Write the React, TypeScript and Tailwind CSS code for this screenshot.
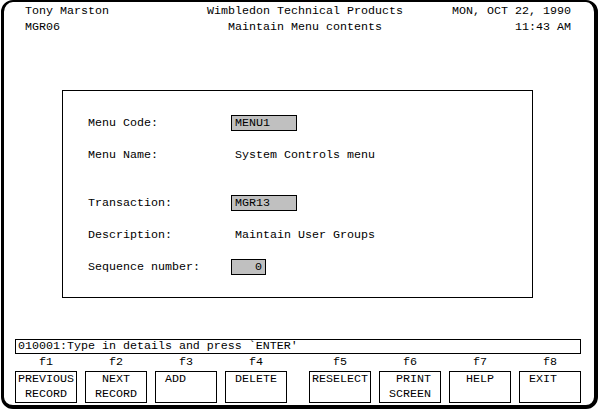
const keys = [
    { f: "f1", lines: ["PREVIOUS", " RECORD"], cls: "ml-[11px]" },
    { f: "f2", lines: ["  NEXT", " RECORD"], cls: "ml-[8px]" },
    { f: "f3", lines: [" ADD"], cls: "ml-[8px]" },
    { f: "f4", lines: [" DELETE"], cls: "ml-[8px]" },
    { f: "f5", lines: ["RESELECT"], cls: "ml-[22px]" },
    { f: "f6", lines: ["  PRINT", " SCREEN"], cls: "ml-[8px]" },
    { f: "f7", lines: ["  HELP"], cls: "ml-[8px]" },
    { f: "f8", lines: [" EXIT"], cls: "ml-[8px]" },
];

const Field = (props: {
    label: string;
    value: string;
    input?: "wide" | "narrow";
    className?: string;
}) => {
    const { label, value, input, className } = props;
    return (
        <div className={`flex h-4 leading-4 ${className ?? ""}`}>
            <span className="w-[143px] whitespace-pre">{label}</span>
            {input === "wide" && (
                <span className="h-4 w-[66px] border border-black bg-[#c0c0c0] pl-[3px] leading-[14px]">
                    {value}
                </span>
            )}
            {input === "narrow" && (
                <span className="h-4 w-[35px] border border-black bg-[#c0c0c0] pr-[3px] text-right leading-[14px]">
                    {value}
                </span>
            )}
            {!input && <span className="pl-1">{value}</span>}
        </div>
    );
};

export default function App() {
    return (
        <div className="w-[599px] h-[409px] bg-white text-black font-['Liberation_Mono','Courier_New',monospace] text-[11.67px]">
            <div className="ml-[1px] w-[597px] h-[409px] border-t-2 border-l-[3px] border-r-4 border-b-4 border-black rounded-[12px]">
                {/* header */}
                <div className="pt-[1px] pl-[21px] leading-4">
                    <div className="flex">
                        <span className="w-[182px]">Tony Marston</span>
                        <span className="w-[196px] text-center">Wimbledon Technical Products</span>
                        <span className="w-[168px] text-right">MON, OCT 22, 1990</span>
                    </div>
                    <div className="flex">
                        <span className="w-[182px]">MGR06</span>
                        <span className="w-[196px] text-center">Maintain Menu contents</span>
                        <span className="w-[168px] text-right">11:43 AM</span>
                    </div>
                </div>

                {/* detail panel */}
                <div className="ml-[58px] mt-[55px] w-[471px] h-[208px] border border-black pt-6 pl-[25px]">
                    <Field label="Menu Code:" value="MENU1" input="wide" />
                    <Field label="Menu Name:" value="System Controls menu" className="mt-4" />
                    <Field label="Transaction:" value="MGR13" input="wide" className="mt-8" />
                    <Field label="Description:" value="Maintain User Groups" className="mt-4" />
                    <Field label="Sequence number:" value="0" input="narrow" className="mt-4" />
                </div>

                {/* message line */}
                <div className="ml-[11px] mt-[41px] w-[566px] h-[15px] border border-black pl-[2px] leading-[13px] whitespace-pre">
                    010001:Type in details and press `ENTER'
                </div>

                {/* function keys */}
                <div className="flex">
                    {keys.map((k) => (
                        <div key={k.f} className={`flex flex-col w-[62px] ${k.cls}`}>
                            <div className="h-[17px] leading-[17px] text-center">{k.f}</div>
                            <div className="h-[32px] border border-black pl-[2px] leading-[15px] whitespace-pre">
                                {k.lines.map((l) => (
                                    <div key={l}>{l}</div>
                                ))}
                            </div>
                        </div>
                    ))}
                </div>
            </div>
        </div>
    );
}
